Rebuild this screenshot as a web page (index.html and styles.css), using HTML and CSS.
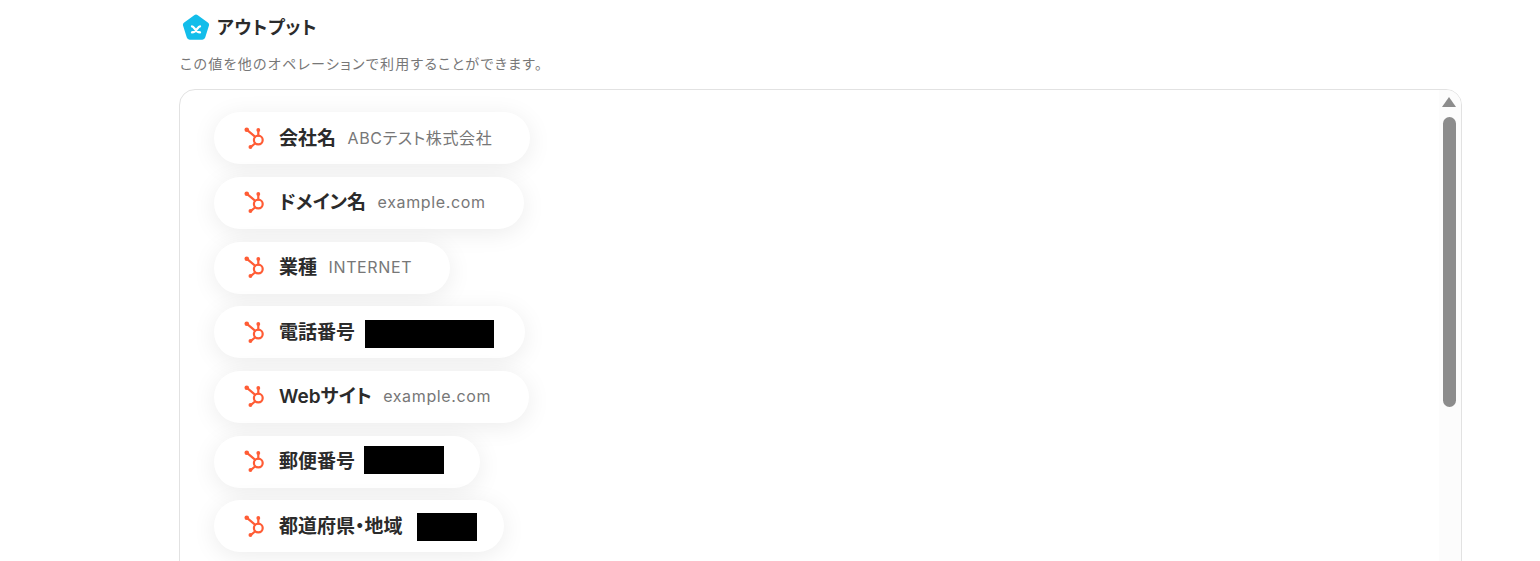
FILE: index.html
```html
<!DOCTYPE html>
<html lang="ja">
<head>
    <meta charset="UTF-8">
    <title>アウトプット</title>
    <link rel="stylesheet" href="styles.css">
</head>
<body>
    <svg class="defs" width="0" height="0">
        <symbol id="hubspot" viewBox="0 0 24 24">
            <g fill="none" stroke="#ff5c35" stroke-width="2.4" stroke-linecap="round">
                <circle cx="15.6" cy="14.2" r="4.8"/>
                <path d="M3.2 3.2 12 10.6"/>
                <path d="M15.6 9.4V4.2"/>
                <path d="M12 18 7.6 21.6"/>
            </g>
            <g fill="#ff5c35">
                <circle cx="3" cy="3" r="2.5"/>
                <circle cx="15.6" cy="3.2" r="2.1"/>
                <circle cx="7" cy="21.8" r="2.1"/>
            </g>
        </symbol>
    </svg>

    <main class="section">
        <div class="title">
            <svg class="title-icon" viewBox="0 0 28 28">
                <path d="M12.2 1.2a3 3 0 0 1 3.6 0l10 7.2a3 3 0 0 1 1.1 3.4l-3.7 11.8a3 3 0 0 1-2.9 2.1H7.7a3 3 0 0 1-2.9-2.1L1.1 11.8a3 3 0 0 1 1.1-3.4z" fill="#13bdea"/>
                <path d="M10 12.4c2.6 0 3 6 8 6M18 12.4c-2.6 0-3 6-8 6" fill="none" stroke="#fff" stroke-width="2.3" stroke-linecap="round"/>
            </svg>
            <h2>アウトプット</h2>
        </div>
        <p class="desc">この値を他のオペレーションで利用することができます。</p>

        <div class="box">
            <ul class="list">
                <li class="pill">
                    <svg class="hs"><use href="#hubspot"/></svg>
                    <span class="label">会社名</span>
                    <span class="value">ABCテスト株式会社</span>
                </li>
                <li class="pill">
                    <svg class="hs"><use href="#hubspot"/></svg>
                    <span class="label">ドメイン名</span>
                    <span class="value">example.com</span>
                </li>
                <li class="pill">
                    <svg class="hs"><use href="#hubspot"/></svg>
                    <span class="label">業種</span>
                    <span class="value">INTERNET</span>
                </li>
                <li class="pill">
                    <svg class="hs"><use href="#hubspot"/></svg>
                    <span class="label">電話番号</span>
                    <span class="redacted phone"></span>
                </li>
                <li class="pill">
                    <svg class="hs"><use href="#hubspot"/></svg>
                    <span class="label">Webサイト</span>
                    <span class="value">example.com</span>
                </li>
                <li class="pill">
                    <svg class="hs"><use href="#hubspot"/></svg>
                    <span class="label">郵便番号</span>
                    <span class="redacted zip"></span>
                </li>
                <li class="pill">
                    <svg class="hs"><use href="#hubspot"/></svg>
                    <span class="label">都道府県・地域</span>
                    <span class="redacted region"></span>
                </li>
            </ul>
            <div class="scrollbar">
                <span class="arrow"></span>
                <span class="thumb"></span>
            </div>
        </div>
    </main>
</body>
</html>
```

FILE: styles.css
```css
html, body {
    height: 561px;
    overflow: hidden;
}
body {
    margin: 0;
    background-color: #fff;
    color: #2b2b2b;
    font-family: Inter, "Noto Sans CJK JP", sans-serif;
    font-feature-settings: "palt";
}
.defs {
    display: block;
    height: 0;
}
.section {
    padding: 14px 78px 0 179px;
}
.title {
    display: flex;
    align-items: center;
    gap: 8px;
    height: 28px;
    padding-left: 3px;
}
.title-icon {
    width: 28px;
    height: 28px;
    margin-right: -1px;
}
.title h2 {
    margin: -5px 0 0;
    font-size: 18px;
    font-weight: 700;
    letter-spacing: 0.04em;
}
.desc {
    margin: 12px 0 0 1px;
    font-size: 14px;
    line-height: 20px;
    letter-spacing: 1.3px;
    color: #777;
}
.box {
    display: flex;
    justify-content: space-between;
    height: 520px;
    margin-top: 15px;
    border: 1px solid #e2e2e2;
    border-radius: 16px;
    overflow: hidden;
}
.list {
    margin: 0;
    padding: 22.3px 0 0 34px;
    list-style: none;
}
.pill {
    display: flex;
    align-items: center;
    width: max-content;
    height: 52px;
    margin-bottom: 12.67px;
    padding: 0 38px 0 29px;
    box-sizing: border-box;
    border-radius: 26px;
    background-color: #fff;
    box-shadow: 0 4px 24px rgba(0,0,0,0.08);
}
.hs {
    width: 22px;
    height: 22px;
    margin: -1px 13.5px 0 0.5px;
}
.label {
    margin-top: -4px;
    font-size: 19px;
    font-weight: 600;
    color: #2b2b2b;
}
.value {
    margin-top: -2px;
    margin-left: 11.5px;
    font-size: 16px;
    letter-spacing: 0.04em;
    color: #777;
}
.redacted {
    display: block;
    height: 28px;
    background-color: #000;
}
.phone {
    width: 129px;
    margin: 3px -7px 0 10px;
}
.zip {
    width: 80px;
    margin: -4px -2px 0 9px;
}
.region {
    width: 60px;
    margin: 2px -11px 0 14px;
}
.scrollbar {
    display: flex;
    flex-direction: column;
    align-items: center;
    flex: none;
    width: 22px;
    padding-right: 2px;
    box-sizing: border-box;
    background-color: #fcfcfc;
}
.arrow {
    width: 0;
    height: 0;
    margin-top: 7px;
    border-left: 7px solid transparent;
    border-right: 7px solid transparent;
    border-bottom: 10px solid #8c8c8c;
}
.thumb {
    width: 13px;
    height: 290px;
    margin-top: 10px;
    border-radius: 7px;
    background-color: #8c8c8c;
}
```
